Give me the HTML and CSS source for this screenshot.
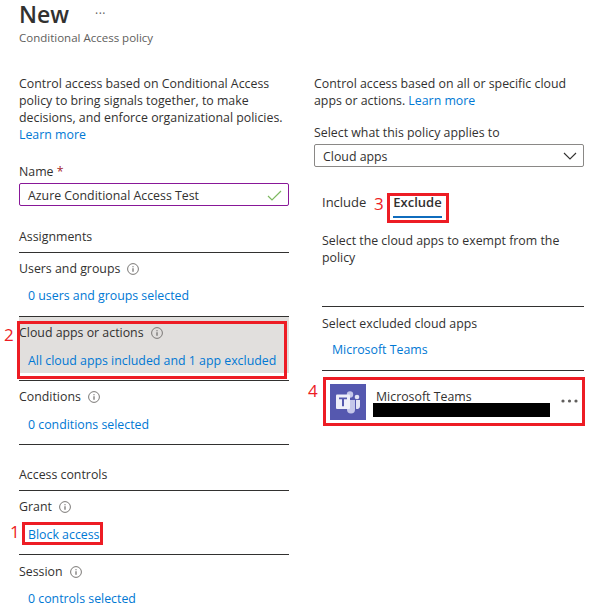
FILE: index.html
```html
<!DOCTYPE html>
<html lang="en">
<head>
    <meta charset="UTF-8">
    <meta name="viewport" content="width=device-width, initial-scale=1.0">
    <title>New Conditional Access policy</title>
    <link rel="stylesheet" href="styles.css">
</head>
<body>
    <svg class="defs" width="0" height="0">
        <symbol id="info" viewBox="0 0 12 12">
            <circle cx="6" cy="6" r="5.4" fill="none" stroke="#7a7876" stroke-width="1"/>
            <path d="M6 5.2v3.6M6 3.2v1" fill="none" stroke="#605e5c" stroke-width="1.1"/>
        </symbol>
    </svg>

    <div class="page">
        <div class="header">
            <div class="title-row">
                <h1>New</h1>
                <span class="more">&middot;&middot;&middot;</span>
            </div>
            <div class="subtitle">Conditional Access policy</div>
        </div>

        <div class="columns">
            <div class="column">
                <p class="text">Control access based on Conditional Access policy to bring signals together, to make decisions, and enforce organizational policies. <a class="link" href="#">Learn more</a></p>

                <label class="field-label name-label">Name <span class="required">*</span></label>
                <div class="input">
                    <span>Azure Conditional Access Test</span>
                    <svg width="15" height="11" viewBox="0 0 15 11"><path d="M1 6l4 4 9-9" fill="none" stroke="#7db860" stroke-width="1.2"/></svg>
                </div>

                <div class="section-title assignments">Assignments</div>
                <div class="item first">
                    <div class="item-inner">
                        <div class="item-label">Users and groups <svg class="info"><use href="#info"/></svg></div>
                        <a class="link item-link" href="#">0 users and groups selected</a>
                    </div>
                </div>
                <div class="item">
                    <div class="item-inner selected">
                        <div class="item-label">Cloud apps or actions <svg class="info"><use href="#info"/></svg></div>
                        <a class="link item-link" href="#">All cloud apps included and 1 app excluded</a>
                    </div>
                </div>
                <div class="item">
                    <div class="item-inner">
                        <div class="item-label">Conditions <svg class="info"><use href="#info"/></svg></div>
                        <a class="link item-link" href="#">0 conditions selected</a>
                    </div>
                </div>

                <div class="section-title access">Access controls</div>
                <div class="item">
                    <div class="item-inner">
                        <div class="item-label">Grant <svg class="info"><use href="#info"/></svg></div>
                        <a class="link item-link" href="#">Block access</a>
                    </div>
                </div>
                <div class="item last">
                    <div class="item-inner">
                        <div class="item-label">Session <svg class="info"><use href="#info"/></svg></div>
                        <a class="link item-link" href="#">0 controls selected</a>
                    </div>
                </div>
            </div>

            <div class="column">
                <p class="text">Control access based on all or specific cloud apps or actions. <a class="link" href="#">Learn more</a></p>

                <label class="field-label applies-label">Select what this policy applies to</label>
                <div class="input select">
                    <span>Cloud apps</span>
                    <svg width="14" height="8" viewBox="0 0 14 8"><path d="M1 1l6 6 6-6" fill="none" stroke="#323130" stroke-width="1.1"/></svg>
                </div>

                <div class="tabs">
                    <span class="tab">Include</span>
                    <span class="tab active">Exclude</span>
                </div>

                <div class="pane">
                    <p class="text">Select the cloud apps to exempt from the policy</p>

                    <div class="picker">
                        <div class="picker-label">Select excluded cloud apps</div>
                        <a class="link picker-link" href="#">Microsoft Teams</a>
                    </div>

                    <div class="app-row">
                        <svg class="app-icon" width="36" height="36" viewBox="0 0 36 36">
                            <rect width="36" height="36" fill="#5558af"/>
                            <circle cx="20" cy="10.500" r="3.200" fill="#c5c7ea"/>
                            <circle cx="27" cy="13" r="2.300" fill="#e3e4f5"/>
                            <path d="M17 16h8v9.500a4 4 0 0 1-8 0z" fill="#c5c7ea"/>
                            <path d="M26 16h4v6a3 3 0 0 1-4 2.800z" fill="#e3e4f5"/>
                            <rect x="6" y="10.500" width="14" height="14.500" rx="1" fill="#eeeef9"/>
                            <path d="M9 13.500h8v1.800h-3v7h-2v-7h-3z" fill="#5558af"/>
                        </svg>
                        <div class="app-info">
                            <div class="app-name">Microsoft Teams</div>
                            <div class="redacted"></div>
                        </div>
                        <svg class="app-more" width="17" height="4" viewBox="0 0 17 4">
                            <circle cx="2" cy="2" r="1.600" fill="#605e5c"/>
                            <circle cx="8.500" cy="2" r="1.600" fill="#605e5c"/>
                            <circle cx="15" cy="2" r="1.600" fill="#605e5c"/>
                        </svg>
                    </div>
                </div>
            </div>
        </div>

        <!-- red annotations on top of the screenshot -->
        <div class="callout callout-cloud"></div>
        <div class="callout callout-block"></div>
        <div class="callout callout-tab"></div>
        <div class="callout callout-app"></div>
        <span class="callout-num num-1">1</span>
        <span class="callout-num num-2">2</span>
        <span class="callout-num num-3">3</span>
        <span class="callout-num num-4">4</span>
    </div>
</body>
</html>
```

FILE: styles.css
```css
html, body {
    margin: 0;
    height: 100%;
    overflow: hidden;
    background: #fff;
}
body {
    font-family: "Open Sans", "Noto Sans", sans-serif;
    font-size: 12.35px;
    line-height: 17px;
    color: #323130;
}
.defs {
    position: absolute;
}
.page {
    position: relative;
    width: 593px;
    height: 607px;
    overflow: hidden;
}
.link {
    color: #0078d4;
    text-decoration: none;
}

/* header */
.header {
    padding-left: 19px;
    height: 75px;
}
.title-row {
    display: flex;
    align-items: flex-start;
    height: 29px;
}
h1 {
    margin: 0;
    font-size: 23px;
    font-weight: 600;
    line-height: 28px;
}
.more {
    margin-left: 26px;
    font-size: 12px;
    line-height: 28px;
    letter-spacing: 0.5px;
    color: #605e5c;
}
.subtitle {
    font-size: 11.5px;
    color: #605e5c;
}

/* columns */
.columns {
    display: grid;
    grid-template-columns: 270px 270px;
    column-gap: 25px;
    padding-left: 19px;
}
.text {
    margin: 0;
}
.field-label {
    display: block;
}
.name-label {
    margin-top: 20px;
}
.required {
    color: #a4262c;
}
.input {
    display: flex;
    align-items: center;
    justify-content: space-between;
    box-sizing: border-box;
    height: 23px;
    margin-top: 3px;
    padding: 1px 6px 0 8px;
    border: 1px solid #881798;
    border-radius: 2px;
}
.select {
    border-color: #8a8886;
}
.section-title {
    padding-bottom: 7px;
    border-bottom: 1px solid #323130;
}
.assignments {
    margin-top: 22px;
}
.access {
    margin-top: 21px;
}

/* assignment rows */
.item {
    padding-bottom: 7px;
    border-bottom: 1px solid #323130;
}
.item.last {
    border-bottom: none;
}
.item-inner {
    padding: 7px 0 4px;
}
.selected {
    background: #e1dfdd;
}
.item-label {
    display: flex;
    align-items: center;
    gap: 7px;
}
.item.last .item-label {
    padding-top: 1px;
}
.info {
    width: 12px;
    height: 12px;
}
.item-link {
    display: block;
    margin-top: 11px;
    padding-left: 9px;
}
.item.first .item-inner {
    padding-bottom: 5px;
}
.item.first .item-link,
.item.last .item-link {
    margin-top: 10px;
}

/* right side */
.applies-label {
    margin-top: 15px;
}
.tabs {
    display: flex;
    gap: 27px;
    margin-top: 27px;
    padding-left: 8px;
    font-size: 13px;
}
.tab {
    padding-bottom: 7px;
}
.tab.active {
    padding-bottom: 5px;
    border-bottom: 2px solid #0f6cbd;
    font-weight: 600;
}
.pane {
    margin-top: 14px;
    padding-left: 8px;
}
.picker {
    margin-top: 40px;
    padding: 8px 0 12px;
    border-top: 1px solid #323130;
    border-bottom: 1px solid #323130;
}
.picker-label {
    margin-bottom: 9px;
}
.picker-link {
    display: block;
    padding-left: 10px;
}
.app-row {
    display: flex;
    align-items: flex-start;
    margin-top: 13px;
    padding-left: 8px;
}
.app-icon {
    flex: none;
}
.app-info {
    margin-left: 10px;
    padding-top: 4px;
}
.app-name {
    height: 15px;
}
.redacted {
    width: 177px;
    height: 14px;
    margin-left: -3px;
    background: #000;
}
.app-more {
    margin: 15px 6px 0 auto;
}

/* annotations */
.callout {
    position: absolute;
    box-sizing: border-box;
    border: 3px solid #ed1c24;
}
.callout-cloud {
    left: 17px;
    top: 321px;
    width: 270px;
    height: 58px;
}
.callout-block {
    left: 22px;
    top: 522px;
    width: 81px;
    height: 23px;
}
.callout-tab {
    left: 387px;
    top: 193px;
    width: 62px;
    height: 30px;
}
.callout-app {
    left: 323px;
    top: 377px;
    width: 262px;
    height: 49px;
}
.callout-num {
    position: absolute;
    font-family: "Open Sans", sans-serif;
    font-size: 17px;
    line-height: 20px;
    color: #ed1c24;
}
.num-1 {
    left: 10px;
    top: 522px;
}
.num-2 {
    left: 4px;
    top: 325px;
}
.num-3 {
    left: 374px;
    top: 194px;
}
.num-4 {
    left: 308px;
    top: 381px;
}
```
